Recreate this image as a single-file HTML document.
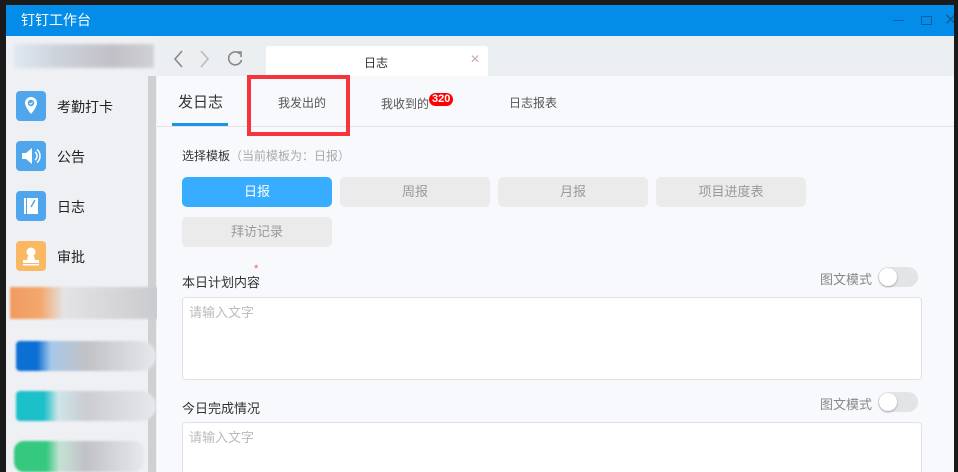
<!DOCTYPE html>
<html><head><meta charset="utf-8"><style>
*{margin:0;padding:0;box-sizing:border-box}
html,body{width:958px;height:472px;overflow:hidden}
body{background:#1a1a1a;font-family:"Liberation Sans","Noto Sans CJK SC",sans-serif;position:relative;font-size:13px}
.a{position:absolute}
.btn{position:absolute;width:150px;height:30px;border-radius:5px;background:#ebebeb;color:#999;text-align:center;line-height:30px;font-size:13px}
.ico{position:absolute;left:16px;width:30px;height:30px;border-radius:4px}
.ico svg{position:absolute;left:0;top:0}
.lbl{position:absolute;left:57px;font-size:14px;color:#222}
.ta{position:absolute;left:182px;width:740px;background:#fff;border:1px solid #e2e2e2;border-radius:4px;color:#bbb;padding:4px 6px;font-size:13px}
.tg{position:absolute;left:878px;width:40px;height:20px;border-radius:10px;background:#e3e4e6}
.tg:after{content:"";position:absolute;left:1px;top:1px;width:18px;height:18px;border-radius:50%;background:#fff;box-shadow:0 1px 2px rgba(0,0,0,.3)}
.tl{position:absolute;left:820px;color:#888;font-size:13px}
</style></head><body>
<div class="a" style="left:6px;top:5px;width:948px;height:31px;background:#038de9"></div>
<div class="a" style="left:21px;top:10px;color:#fff;font-size:14px">钉钉工作台</div>
<div class="a" style="left:893px;top:20px;width:11px;height:1px;background:#0b5fa0"></div>
<div class="a" style="left:921px;top:16px;width:11px;height:9px;border:1px solid #0b5fa0"></div>
<div class="a" style="left:944px;top:10px;color:#0b5fa0;font-size:16px">✕</div>
<div class="a" style="left:6px;top:36px;width:151px;height:436px;background:#eef0f4"></div>
<div class="a" style="left:14px;top:44px;width:140px;height:24px;background:linear-gradient(90deg,#dce6f2,#c6cdd6 30%,#b8b4bc 70%,#c8cacd);opacity:.8;filter:blur(1.5px)"></div>
<div class="a" style="left:148px;top:76px;width:8px;height:396px;background:#cfd0d2"></div>
<div class="ico" style="top:91px;background:#4fa6ec"><svg width="30" height="30"><path d="M15 6a6 6 0 0 0-6 6c0 4 6 11 6 11s6-7 6-11a6 6 0 0 0-6-6z" fill="#fff"/><circle cx="15" cy="12" r="3.2" fill="#4fa6ec"/><path d="M13.5 12l1.2 1.2 2-2" stroke="#fff" stroke-width="1" fill="none"/></svg></div><div class="lbl" style="top:97px">考勤打卡</div>
<div class="ico" style="top:141px;background:#4fa6ec"><svg width="30" height="30"><path d="M6 12h4l6-5v16l-6-5H6z" fill="#fff"/><path d="M19 11a5 5 0 0 1 0 8M21 8.5a8.5 8.5 0 0 1 0 13" stroke="#fff" stroke-width="1.5" fill="none"/></svg></div><div class="lbl" style="top:147px">公告</div>
<div class="ico" style="top:191px;background:#4fa6ec"><svg width="30" height="30"><rect x="8" y="7" width="2" height="16" fill="#fff"/><path d="M11 7h11v16H11z" fill="#fff"/><path d="M19 9l-4 7" stroke="#4fa6ec" stroke-width="1.5"/></svg></div><div class="lbl" style="top:197px">日志</div>
<div class="ico" style="top:241px;background:#fbb862"><svg width="30" height="30"><circle cx="15" cy="11" r="4.5" fill="#fff"/><path d="M12 15h6l1 4h4v3H7v-3h4z" fill="#fff"/><rect x="7" y="23" width="16" height="1.5" fill="#fff"/></svg></div><div class="lbl" style="top:247px">审批</div>
<div class="a" style="left:10px;top:287px;width:154px;height:32px;background:linear-gradient(90deg,#f29a60,#f3a86e 20%,#e3e3e6 35%,#c8c9cc);filter:blur(1px)"></div>
<div class="a" style="left:16px;top:341px;width:140px;height:30px;background:linear-gradient(90deg,#0c6fd3 15%,#a8c8ea 25%,#c0c2c6 50%,#e6e8ec);border-radius:4px 15px 15px 4px;filter:blur(1px)"></div>
<div class="a" style="left:16px;top:391px;width:140px;height:30px;background:linear-gradient(90deg,#1cc0c8 20%,#cde5e8 30%,#cbcdd1 50%,#e6e8ec);border-radius:4px 15px 15px 4px;filter:blur(1px)"></div>
<div class="a" style="left:14px;top:441px;width:130px;height:31px;background:linear-gradient(90deg,#35c87f 25%,#c6e2d6 35%,#c0c2c6 55%,#e6e8ec);border-radius:10px;filter:blur(1px)"></div>
<div class="a" style="left:157px;top:36px;width:797px;height:40px;background:#eceff2"></div>
<svg class="a" style="left:170px;top:48px" width="80" height="22"><path d="M12 3L5 11l7 8" stroke="#888" stroke-width="1.6" fill="none"/><path d="M31 3l7 8-7 8" stroke="#bbb" stroke-width="1.6" fill="none"/><path d="M70 6a6.5 6.5 0 1 0 1.5 6" stroke="#888" stroke-width="1.6" fill="none"/><path d="M66 4h5v5" stroke="#888" stroke-width="1.6" fill="none"/></svg>
<div class="a" style="left:266px;top:46px;width:222px;height:30px;background:#fff;border-radius:3px 3px 0 0"></div>
<div class="a" style="left:364px;top:54px;color:#333;font-size:12px">日志</div>
<div class="a" style="left:470px;top:52px;color:#caa;font-size:12px">✕</div>
<div class="a" style="left:157px;top:76px;width:797px;height:396px;background:#f8f9fd"></div>
<div class="a" style="left:157px;top:126px;width:797px;height:1px;background:#e2e3e6"></div>
<div class="a" style="left:178px;top:91px;font-size:15px;color:#333">发日志</div>
<div class="a" style="left:172px;top:123px;width:56px;height:3px;background:#1a95e8"></div>
<div class="a" style="left:278px;top:94px;font-size:12px;color:#555">我发出的</div>
<div class="a" style="left:381px;top:95px;font-size:12px;color:#555">我收到的</div>
<div class="a" style="left:429px;top:93px;height:13px;padding:0 3px;border-radius:7px;background:#f00;color:#fff;font-size:11px;line-height:13px;font-weight:bold">320</div>
<div class="a" style="left:509px;top:94px;font-size:12px;color:#555">日志报表</div>
<div class="a" style="left:247px;top:75px;width:103px;height:61px;border:4px solid #f5343c"></div>
<div class="a" style="left:182px;top:147px;font-size:12px;color:#333">选择模板<span style="color:#aaa">（当前模板为：日报）</span></div>
<div class="btn" style="left:182px;top:177px;background:#38adff;color:#fff">日报</div>
<div class="btn" style="left:340px;top:177px">周报</div>
<div class="btn" style="left:498px;top:177px">月报</div>
<div class="btn" style="left:656px;top:177px">项目进度表</div>
<div class="btn" style="left:182px;top:217px">拜访记录</div>
<div class="a" style="left:182px;top:272px;color:#333">本日计划内容</div>
<div class="a" style="left:254px;top:263px;color:#f55;font-size:11px">*</div>
<div class="tl" style="top:269px">图文模式</div><div class="tg" style="top:267px"></div>
<div class="ta" style="top:297px;height:83px">请输入文字</div>
<div class="a" style="left:182px;top:398px;color:#333">今日完成情况</div>
<div class="tl" style="top:394px">图文模式</div><div class="tg" style="top:392px"></div>
<div class="ta" style="top:422px;height:50px;border-bottom:none;border-radius:4px 4px 0 0">请输入文字</div>
<div class="a" style="left:954px;top:0;width:4px;height:472px;background:#1a1a1a"></div>
</body></html>
